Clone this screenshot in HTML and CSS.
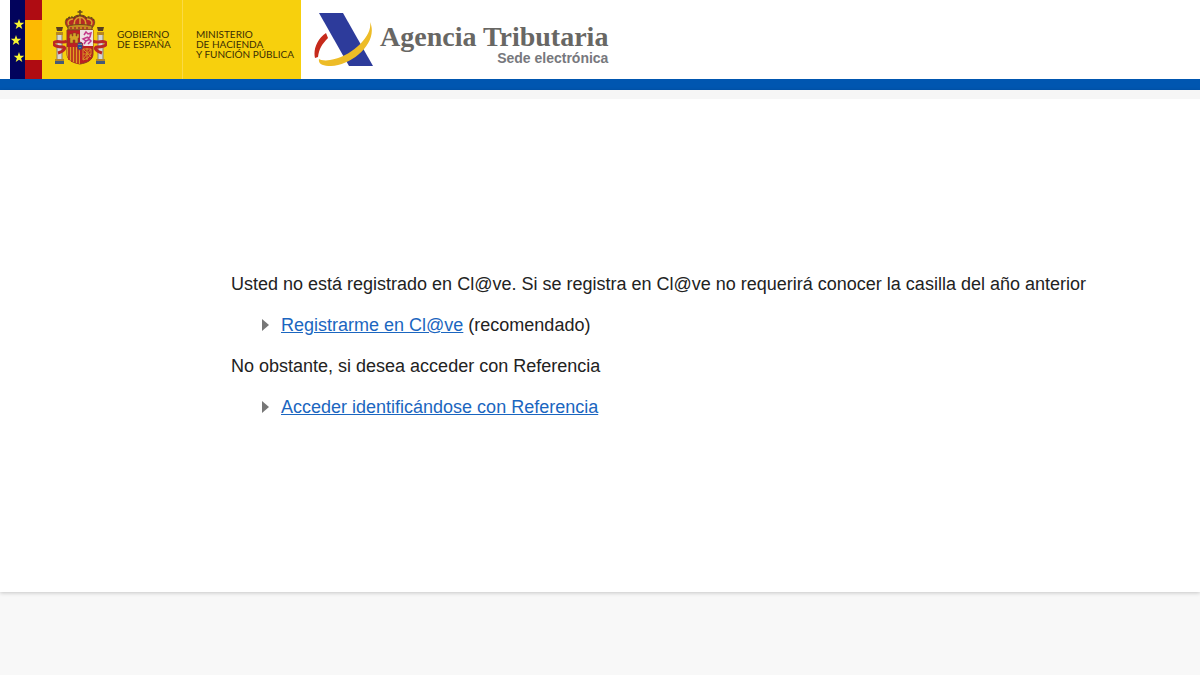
FILE: index.html
```html
<!DOCTYPE html>
<html lang="es">
<head>
  <meta charset="UTF-8">
  <meta name="viewport" content="width=device-width, initial-scale=1.0">
  <title>Agencia Tributaria - Sede electrónica</title>
  <link rel="stylesheet" href="styles.css">
</head>
<body>
  <header class="header">
    <!-- Gobierno de España -->
    <div class="gobierno">
      <svg class="banderas" viewBox="0 0 32 79" aria-hidden="true">
        <rect width="15" height="79" fill="#02035c"/>
        <rect x="15" width="17" height="79" fill="#af0c12"/>
        <rect x="15" y="20" width="17" height="40" fill="#fdba02"/>
        <g fill="#f6f431">
          <path id="star" d="M9 19l1.300 3.800h4l-3.200 2.400 1.200 3.800-3.300-2.300-3.300 2.300 1.200-3.800-3.200-2.400h4z"/>
          <use href="#star" x="-3" y="16"/>
          <use href="#star" y="33"/>
        </g>
      </svg>
      <svg class="escudo" viewBox="0 0 54 56" aria-hidden="true">
        <!-- corona -->
        <path d="M27 0v6M24.500 2h5" stroke="#65471c" stroke-width="1.500"/>
        <path d="M15 18C9 11 14 7 20 8c3-4 11-4 14 0 6-1 11 3 5 10z" fill="#b52a24" stroke="#765019"/>
        <path d="M17 17c-4-5-1-8 3-8M37 17c4-5 1-8-3-8M22 17c-2-5 0-9 5-10 5 1 7 5 5 10M27 6v11" fill="none" stroke="#d6a62c" stroke-width="1.500"/>
        <path d="M13 10c3-4 7-3 8-2 3-3 9-3 12 0 1-1 5-2 8 2" fill="none" stroke="#60451a" stroke-width="1.500" stroke-dasharray="2 1"/>
        <path d="M15 16c7-2 17-2 24 0v4H15z" fill="#c58a22" stroke="#704a19"/>
        <path d="M17 18h20" stroke="#a82d28" stroke-width="1.500" stroke-dasharray="2 2"/>
        <!-- columnas -->
        <g id="columna">
          <path d="M4 23h5v28H4z" fill="#d8d7d2" stroke="#85817b"/>
          <path d="M3 17h7l-1 4H4z" fill="#573e20"/>
          <path d="M3 22h7v3H3zM2 49h9v2H2z" fill="#b88720"/>
          <path d="M2 51h9v3H2z" fill="#455b77"/>
        </g>
        <use href="#columna" x="41"/>
        <!-- cintas -->
        <path d="M14 31c-4 3-12-2-13 2-1 3 4 4 9 4 3 0 2 4-5 6M40 31c4 3 12-2 13 2 1 3-4 4-9 4-3 0-2 4 5 6" fill="none" stroke="#bb2726" stroke-width="3"/>
        <!-- cuarteles -->
        <path d="M14 20h26v24c0 6-6 9-13 10-7-1-13-4-13-10z" fill="#bd1f22" stroke="#8b3c20"/>
        <path d="M27 20h13v16H27z" fill="#eee1e5"/>
        <path d="M17 24h2v2h1v-3h3v3h1v-2h2v4h-1v5h-3v-3h-2v3h-3v-5h-1z" fill="#d8a326" stroke="#76511e" stroke-width=".5"/>
        <path d="M31 25l2-3 2 2 3-1-1 4-2 1 3 3-3 3M35 27l-5 2 3 2-2 3M37 29l-4 2" fill="none" stroke="#c33889" stroke-width="1.500"/>
        <path d="M14 37h13v17c-7-1-13-4-13-10z" fill="#e0a021"/>
        <path d="M16 37v13M19 37v15M22 37v16M25 37v17" stroke="#b4201e" stroke-width="1.500"/>
        <path d="M30 39h8v5l-3 4-5 2zM30 39l8 8M38 39l-8 10M34 38v12M30 44h8" fill="none" stroke="#d89322"/>
        <ellipse cx="27" cy="36" rx="3" ry="4" fill="#234d99" stroke="#a42a38"/>
        <path d="M26 34v1M28 34v1M27 37v1" stroke="#e3bd36"/>
      </svg>
      <span class="gobierno-texto">GOBIERNO<br>DE ESPAÑA</span>
      <span class="ministerio">MINISTERIO<br>DE HACIENDA<br>Y FUNCIÓN PÚBLICA</span>
    </div>

    <!-- Agencia Tributaria -->
    <div class="agencia">
      <svg class="agencia-logo" viewBox="0 0 60 56" aria-hidden="true">
        <path d="M5 1h24l30 53H35z" fill="#2d3b9b"/>
        <path d="M12 21C3 27-1 38 1 46l3-1c1-8 4-13 10-19z" fill="#c62a1b"/>
        <path d="M56 10c3 14-19 35-40 38-5 1-10 0-11-1-1 5 4 7 12 7C39 53 65 30 56 10z" fill="#edbc27"/>
      </svg>
      <div class="agencia-nombre">
        <span class="agencia-titulo">Agencia Tributaria</span>
        <span class="agencia-sede">Sede electrónica</span>
      </div>
    </div>
  </header>

  <main class="contenido">
    <p>Usted no está registrado en Cl@ve. Si se registra en Cl@ve no requerirá conocer la casilla del año anterior</p>
    <ul>
      <li><a href="#">Registrarme en Cl@ve</a> (recomendado)</li>
    </ul>
    <p>No obstante, si desea acceder con Referencia</p>
    <ul>
      <li><a href="#">Acceder identificándose con Referencia</a></li>
    </ul>
  </main>
</body>
</html>
```

FILE: styles.css
```css
* {
  box-sizing: border-box;
}

body {
  margin: 0;
  min-height: 100vh;
  display: flex;
  flex-direction: column;
  font-family: "Liberation Sans", Arial, sans-serif;
  background-color: #f8f8f8;
  color: #222;
}

/* Cabecera */
.header {
  display: flex;
  align-items: stretch;
  padding-left: 10px;
  background-color: #fff;
  border-bottom: 11px solid #0056b0;
}

.gobierno {
  display: flex;
  background-color: #f7d00d;
  color: #3b2e04;
  font-family: Lato, "Liberation Sans", sans-serif;
  font-size: 10px;
  line-height: 10px;
  white-space: nowrap;
}

.banderas {
  width: 32px;
  height: 79px;
}

.escudo {
  width: 54px;
  height: 56px;
  margin: 10px 10px 0 11px;
}

.gobierno-texto {
  width: 65px;
  padding-top: 29px;
}

.ministerio {
  width: 119px;
  padding: 29px 0 0 13px;
  border-left: 1px solid #fada45;
}

.agencia {
  display: flex;
  align-items: flex-start;
  padding: 12px 0 0 13px;
}

.agencia-logo {
  width: 60px;
  height: 56px;
}

.agencia-nombre {
  display: flex;
  flex-direction: column;
  align-items: flex-end;
  margin-left: 6px;
  padding-top: 10px;
}

.agencia-titulo {
  font-family: "Liberation Serif", "Times New Roman", serif;
  font-size: 28px;
  font-weight: bold;
  line-height: 30px;
  color: #686764;
}

.agencia-sede {
  font-size: 14px;
  font-weight: bold;
  line-height: 12px;
  color: #77787d;
}

/* Contenido */
.contenido {
  min-height: 502px;
  padding: 173px 20px 0 231px;
  background-color: #fff;
  border-top: 9px solid #f6f6f6;
  box-shadow: 0 1px 4px rgba(0, 0, 0, 0.2);
  font-size: 18px;
  line-height: 24px;
}

.contenido p {
  margin: 0 0 17px;
}

.contenido ul {
  margin: 0 0 17px;
  padding: 0 0 0 31px;
  list-style: none;
}

.contenido li {
  display: flex;
  align-items: center;
  white-space: pre;
}

.contenido li::before {
  content: "";
  margin-right: 12px;
  border-left: 7px solid #777;
  border-top: 6px solid transparent;
  border-bottom: 6px solid transparent;
}

.contenido a {
  color: #1b66c0;
}
```
